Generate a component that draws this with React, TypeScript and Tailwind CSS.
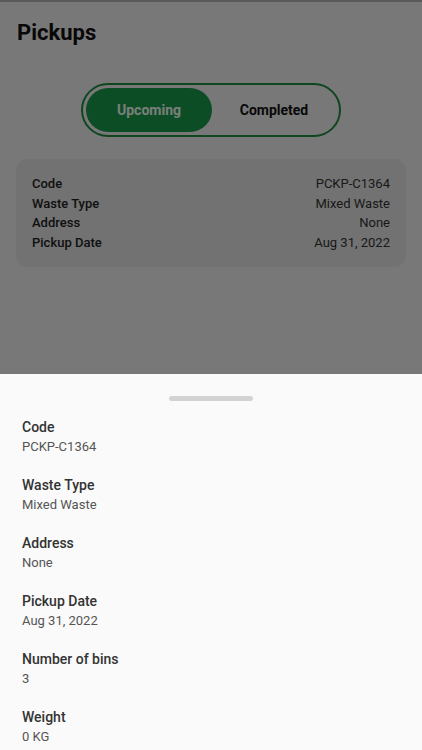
import { useState } from "react";

const SUMMARY = [
  { label: "Code", value: "PCKP-C1364" },
  { label: "Waste Type", value: "Mixed Waste" },
  { label: "Address", value: "None" },
  { label: "Pickup Date", value: "Aug 31, 2022" },
];

const DETAILS = [
  ...SUMMARY,
  { label: "Number of bins", value: "3" },
  { label: "Weight", value: "0 KG" },
];

export default function App() {
  const [tab, setTab] = useState<"upcoming" | "completed">("upcoming");

  return (
    <div className="relative h-[750px] w-[422px] overflow-hidden bg-[#f0f0f0] font-['Roboto',sans-serif]">
      <div className="h-[2px] bg-[#b4b4b4]" />

      {/* Page under the sheet */}
      <div className="px-[17px] pt-[17px]">
        <h1 className="text-[22px] font-bold leading-[28px] text-[#111]">Pickups</h1>
      </div>

      <div className="mt-[36px] flex justify-center">
        <div className="flex h-[54px] w-[260px] items-center rounded-full border-2 border-[#1e8a3f] p-[3px]">
          <button
            onClick={() => setTab("upcoming")}
            className={`h-full w-[126px] rounded-full text-[14px] font-bold ${
              tab === "upcoming" ? "bg-[#1b9a4b] text-[#f2fff5]" : "text-[#111]"
            }`}
          >
            Upcoming
          </button>
          <button
            onClick={() => setTab("completed")}
            className={`h-full flex-1 rounded-full text-[14px] font-bold ${
              tab === "completed" ? "bg-[#1b9a4b] text-[#f2fff5]" : "text-[#111]"
            }`}
          >
            Completed
          </button>
        </div>
      </div>

      <div className="mx-[16px] mt-[22px] rounded-[12px] bg-[#e4e4e4] px-[16px] py-[15px]">
        {SUMMARY.map((row) => (
          <div key={row.label} className="flex justify-between text-[13px] leading-[19.5px]">
            <span className="font-medium text-[#222]">{row.label}</span>
            <span className="text-[#333]">{row.value}</span>
          </div>
        ))}
      </div>

      {/* Scrim */}
      <div className="absolute inset-0 bg-black/50" />

      {/* Bottom sheet */}
      <div className="absolute inset-x-0 top-[374px] bottom-0 bg-[#fafafa] px-[22px]">
        <div className="mx-auto mt-[22px] h-[5px] w-[84px] rounded-full bg-[#d3d3d3]" />
        <div className="mt-[16px] flex flex-col gap-[18px]">
          {DETAILS.map((row) => (
            <div key={row.label}>
              <p className="text-[14px] font-medium leading-[20px] text-[#333]">{row.label}</p>
              <p className="text-[13px] leading-[20px] text-[#555]">{row.value}</p>
            </div>
          ))}
        </div>
      </div>
    </div>
  );
}
